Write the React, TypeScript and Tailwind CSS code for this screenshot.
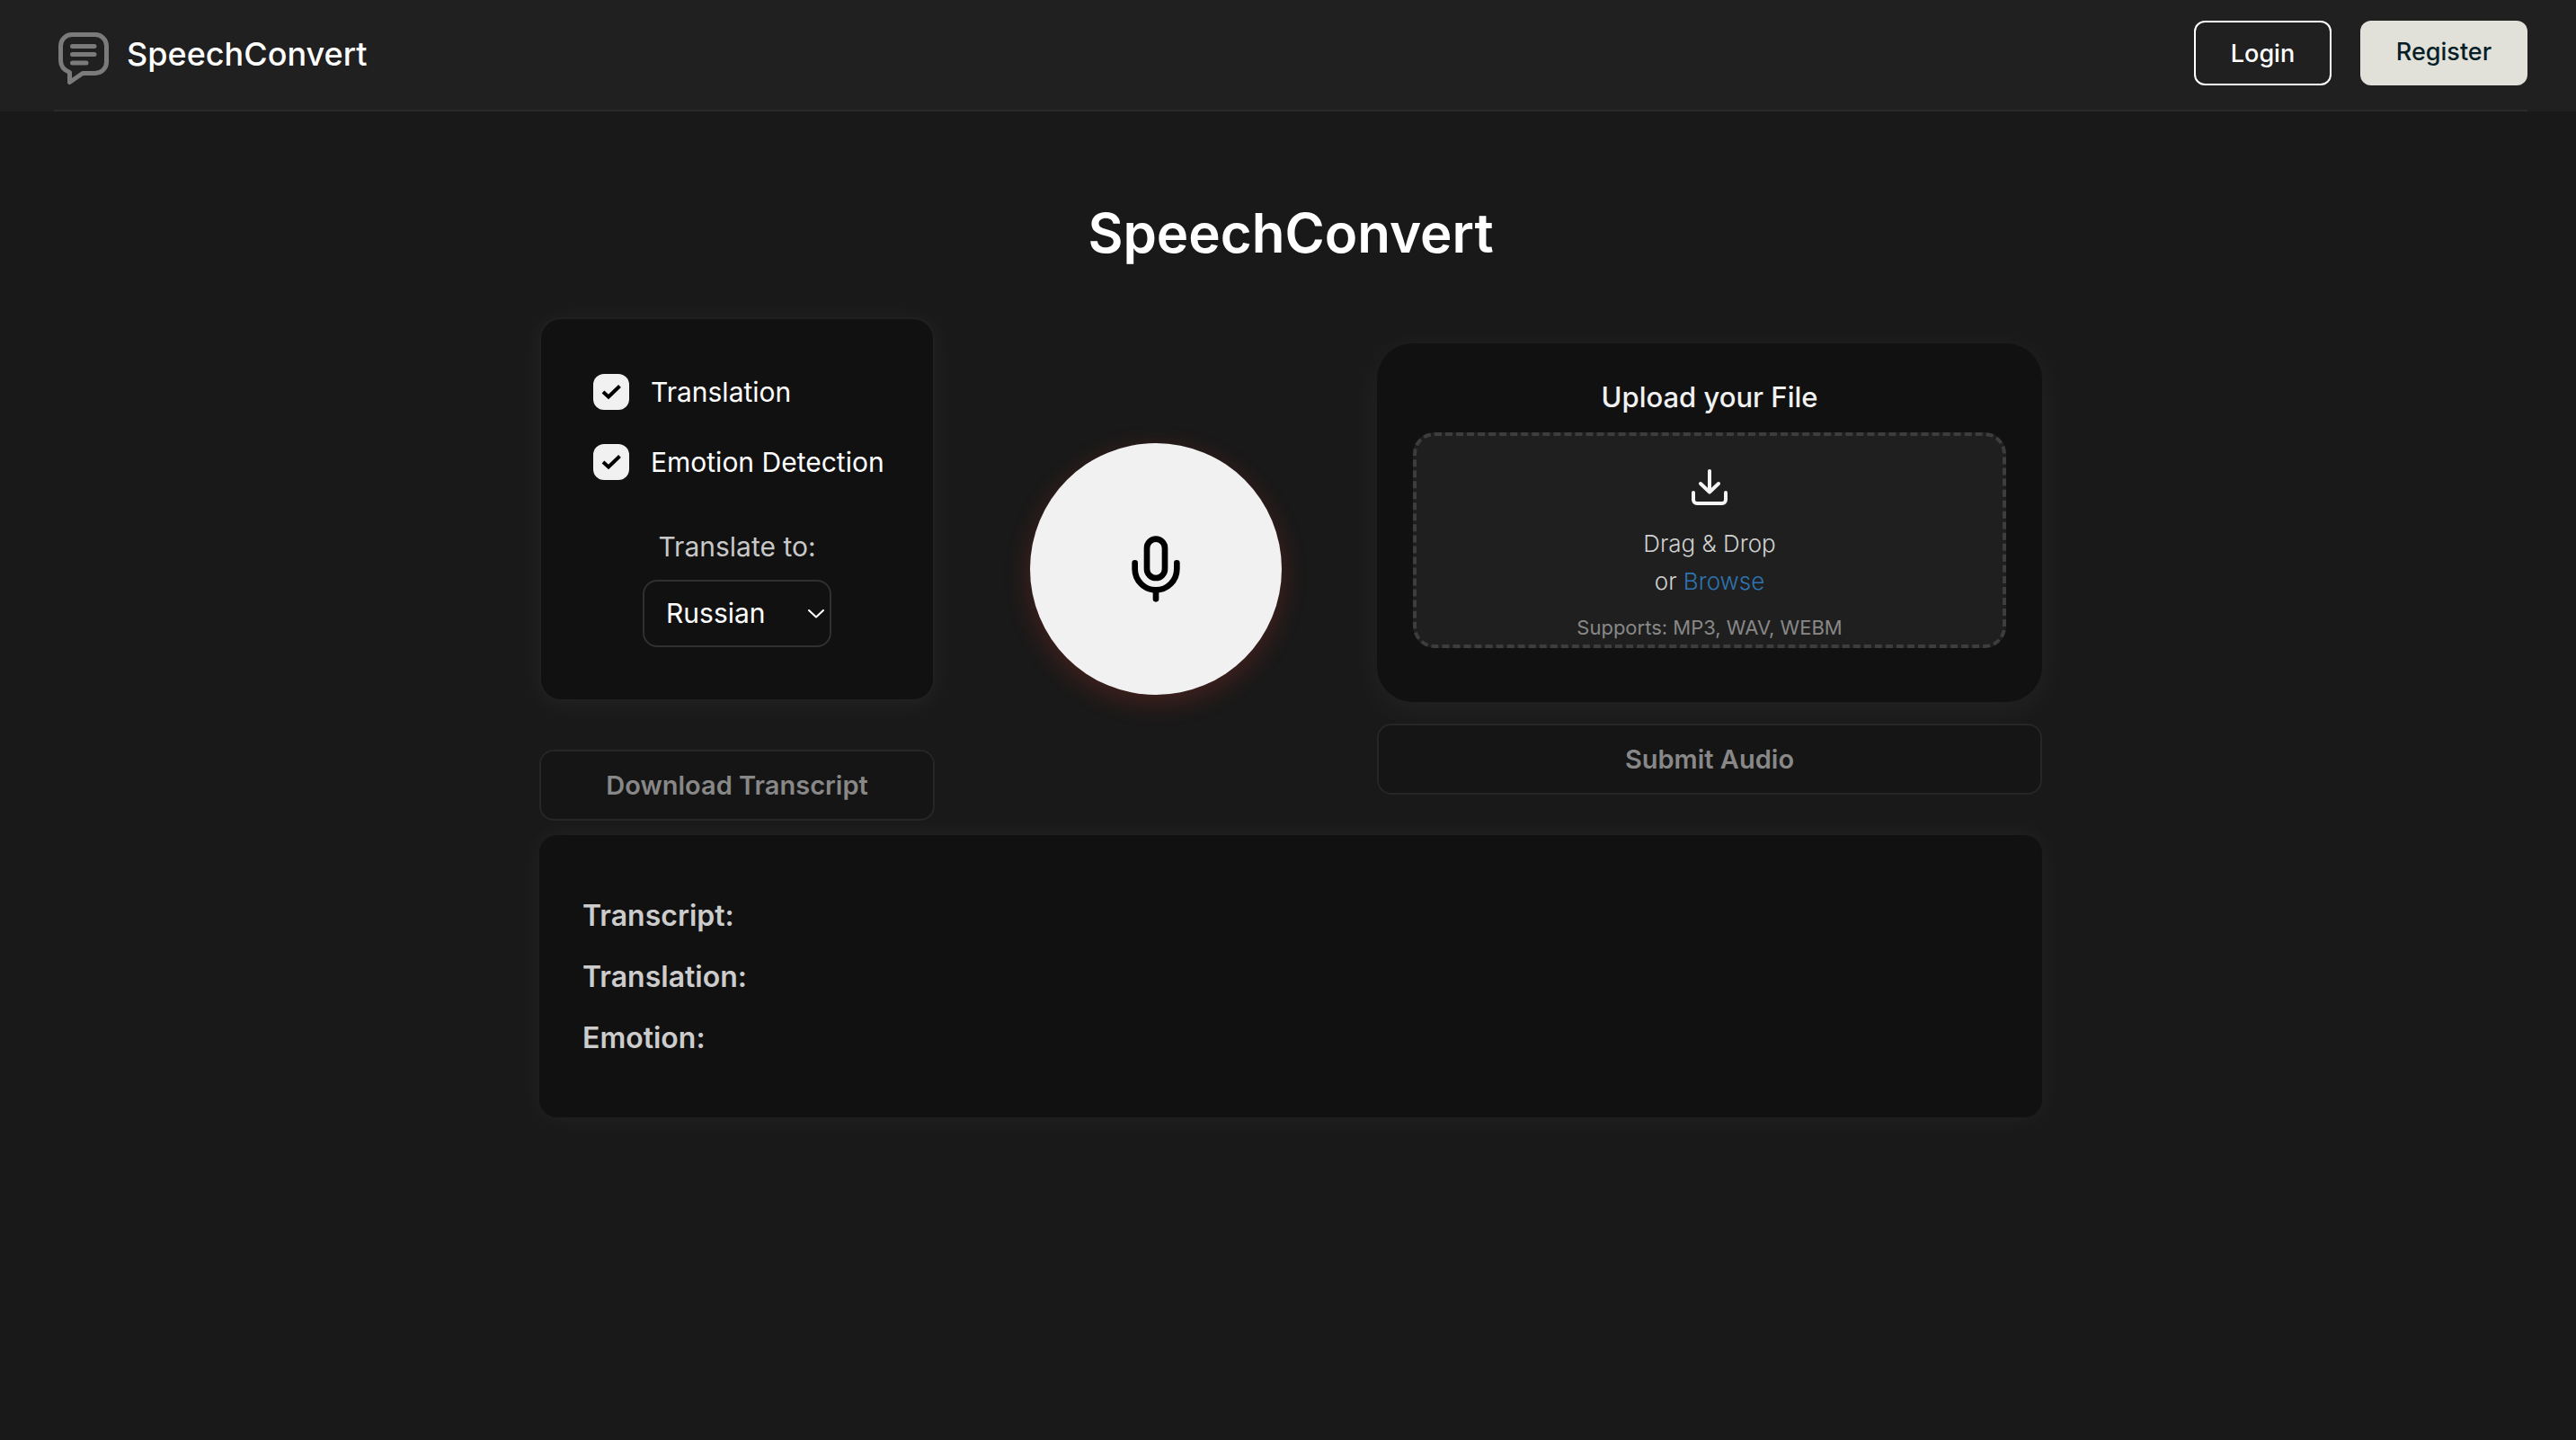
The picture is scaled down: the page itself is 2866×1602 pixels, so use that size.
import { Mic } from "lucide-react";
import type { ReactNode } from "react";

function Logo() {
  return (
    <svg viewBox="0 0 56 58" className="h-[58px] w-14" fill="none" stroke="#7b7b7b" strokeLinecap="round" strokeLinejoin="round" aria-hidden="true">
      <path strokeWidth="5" d="M15 2.500H41A12.500 12.500 0 0 1 53.500 15V33A12.500 12.500 0 0 1 41 45.500H27L12.500 55.500V44.500C6 42 2.500 38 2.500 31V15A12.500 12.500 0 0 1 15 2.500Z" />
      <path strokeWidth="5" d="M15.500 15.500H40M15.500 24.500H40M15.500 34H31" />
    </svg>
  );
}

function DownloadIcon() {
  return (
    <svg viewBox="0 0 40 40" className="size-10 shrink-0" fill="none" stroke="#f5f5f5" strokeWidth="4" strokeLinecap="round" strokeLinejoin="round" aria-hidden="true">
      <path d="M20 2V25.500M10 16L20 25.500L30 16M2 26V34A4 4 0 0 0 6 38H34A4 4 0 0 0 38 34V26" />
    </svg>
  );
}

function CheckOption({ children }: { children: ReactNode }) {
  return (
    <label className="flex h-10 cursor-pointer items-center gap-6 text-[30px] leading-10 whitespace-nowrap text-white">
      <span className="grid size-10 shrink-0 place-items-center">
        <input type="checkbox" defaultChecked className="peer col-start-1 row-start-1 size-10 appearance-none rounded-xl bg-[#f1f1f1]" />
        <svg viewBox="0 0 22 18" className="pointer-events-none col-start-1 row-start-1 hidden h-[18px] w-[22px] peer-checked:block" fill="none" stroke="#000" strokeWidth="4" aria-hidden="true">
          <path d="M2 9L8 14.500L20.500 2.500" />
        </svg>
      </span>
      {children}
    </label>
  );
}

export default function App() {
  return (
    <div className="min-h-screen bg-[#191919] font-['Inter',sans-serif] text-white">
      <header className="bg-[#202020] pr-[54px] pl-15">
        <div className="flex items-start justify-between border-b-2 border-[#2b2b2b] pt-[23px] pb-[27px]">
          <a href="#" className="flex items-center gap-5 pt-[13px] pl-[5px]">
            <Logo />
            <span className="pb-2.5 text-[36px] leading-[46px] font-medium">SpeechConvert</span>
          </a>
          <nav className="flex gap-8">
            <button className="h-18 w-[153px] rounded-xl border-2 border-white pt-0.5 text-[27px] font-medium">Login</button>
            <button className="h-18 w-[186px] rounded-xl bg-[#e1e1da] pb-0.5 text-[27px] font-medium text-[#061f26]">Register</button>
          </nav>
        </div>
      </header>

      <main className="pr-[54px] pl-15">
        <div className="mx-auto w-full max-w-[1672px]">
          <h1 className="pt-[95px] text-center text-[60px] leading-20 font-semibold">SpeechConvert</h1>

          <div className="mt-[54px] flex items-start justify-between">
            <section className="w-[440px]">
              <div className="flex h-[427px] flex-col items-center rounded-3xl border-2 border-[#202020] bg-[#111] pt-[61px] shadow-[0_4px_30px_rgba(255,255,255,0.05)]">
                <div className="flex w-80 flex-col gap-[38px]">
                  <CheckOption>Translation</CheckOption>
                  <CheckOption>Emotion Detection</CheckOption>
                </div>
                <label htmlFor="language" className="mt-[54px] text-[30px] leading-10 text-[#c8c8c8]">Translate to:</label>
                <div className="mt-[17px] grid w-[210px] items-center">
                  <select id="language" className="col-start-1 row-start-1 h-[75px] w-full appearance-none rounded-2xl border-2 border-[#303030] bg-[#111] pl-6 text-[30px] text-white">
                    <option>Russian</option>
                    <option>English</option>
                    <option>Spanish</option>
                  </select>
                  <svg viewBox="0 0 18 10" className="pointer-events-none col-start-1 row-start-1 mr-2 h-2.5 w-[18px] justify-self-end" fill="none" stroke="#fff" strokeWidth="2" strokeLinecap="round" strokeLinejoin="round" aria-hidden="true">
                    <path d="M1 1L9 8.500L17 1" />
                  </svg>
                </div>
              </div>
              <button disabled className="mt-[54px] h-[79px] w-full rounded-2xl border-2 border-[#262626] bg-[#151515] text-[29px] font-semibold text-[#888]">Download Transcript</button>
            </section>

            <button aria-label="Record" className="mt-[140px] flex size-[280px] items-center justify-center rounded-full bg-[#f1f1f1] text-black shadow-[0_8px_30px_rgba(255,69,50,0.2)]">
              <Mic className="size-20" />
            </button>

            <section className="mt-[29px] w-[740px]">
              <div className="h-[399px] rounded-[40px] bg-[#111] px-10 pt-10 shadow-[0_8px_40px_rgba(255,255,255,0.05)]">
                <h2 className="text-center text-[31px] leading-10 font-medium text-[#f1f1f1]">Upload your File</h2>
                <div className="mt-[19px] flex h-60 flex-col items-center rounded-3xl border-4 border-dashed border-[#3d3d3d] bg-[#1f1f1f] pt-[37px]">
                  <DownloadIcon />
                  <p className="mt-[22px] text-center text-[26px] leading-[42px] font-light text-[#d0d0d0]">
                    Drag &amp; Drop
                    <br />
                    or <a href="#" className="text-[#2f74b0]">Browse</a>
                  </p>
                  <p className="mt-3.5 text-[22px] leading-8 text-[#888]">Supports: MP3, WAV, WEBM</p>
                </div>
              </div>
              <button disabled className="mt-6 h-[79px] w-full rounded-2xl border-2 border-[#262626] bg-[#151515] text-[29px] font-semibold text-[#888]">Submit Audio</button>
            </section>
          </div>

          <section className="mt-4 flex h-[314px] flex-col gap-7 rounded-[20px] bg-[#111] pt-[70px] pl-12 text-[32px] leading-10 font-semibold text-[#ccc] shadow-[0_0_30px_rgba(255,255,255,0.05)]">
            <p>Transcript:</p>
            <p>Translation:</p>
            <p>Emotion:</p>
          </section>
        </div>
      </main>
    </div>
  );
}
